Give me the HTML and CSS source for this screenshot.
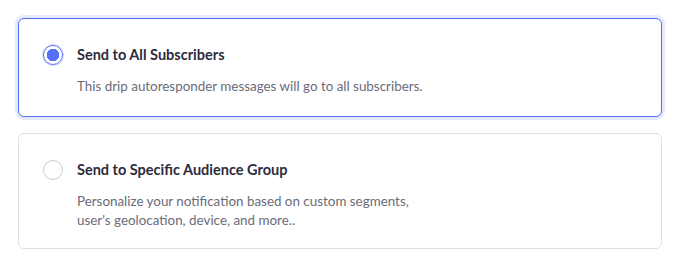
FILE: index.html
```html
<!DOCTYPE html>
<html lang="en">
<head>
    <meta charset="UTF-8">
    <meta name="viewport" content="width=device-width, initial-scale=1.0">
    <title>Audience</title>
    <link rel="stylesheet" href="styles.css">
</head>
<body>
    <div class="options">
        <!-- Selected option -->
        <label class="option selected">
            <span class="radio"></span>
            <div class="option-body">
                <h3>Send to All Subscribers</h3>
                <p>This drip autoresponder messages will go to all subscribers.</p>
            </div>
        </label>

        <label class="option">
            <span class="radio"></span>
            <div class="option-body">
                <h3>Send to Specific Audience Group</h3>
                <p>Personalize your notification based on custom segments, user's geolocation, device, and more..</p>
            </div>
        </label>
    </div>
</body>
</html>
```

FILE: styles.css
```css
* {
    margin: 0;
    padding: 0;
    box-sizing: border-box;
    font-family: Lato, "Open Sans", sans-serif;
}
body {
    background: #fff;
    color: #2d2c3e;
}
.options {
    padding: 18px 0 0 18px;
    display: flex;
    flex-direction: column;
    gap: 16px;
    width: 662px;
}
.option {
    display: flex;
    gap: 14px;
    border: 1px solid #dfe0e4;
    border-radius: 6px;
    padding: 25px 24px 18px 24px;
    min-height: 116px;
    cursor: pointer;
}
.option.selected {
    border-color: #4e6cf5;
    box-shadow: 0 0 0 3px #e7e9fc;
    min-height: 99px;
}
.radio {
    flex: none;
    width: 20px;
    height: 20px;
    margin-top: 1px;
    border: 1px solid #c9c9d2;
    border-radius: 50%;
    background: #fff;
}
.selected .radio {
    border-color: #5b73f6;
    box-shadow: 0 0 0 1px #d9defd;
    background: radial-gradient(circle, #5570f7 0 6px, #fff 6.5px);
}
.option-body h3 {
    font-size: 14.5px;
    font-weight: 700;
    line-height: 22px;
    color: #2d2c3e;
}
.option-body p {
    margin-top: 11px;
    font-size: 13.4px;
    line-height: 19px;
    color: #6b6b78;
    max-width: 350px;
}
.selected .option-body p {
    max-width: none;
}
```
